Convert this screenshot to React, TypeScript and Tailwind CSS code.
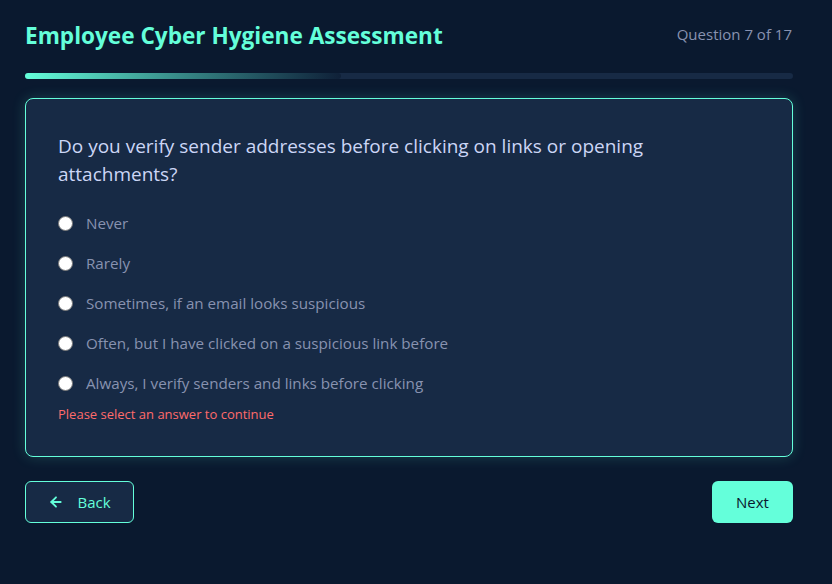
import { ArrowLeft } from "lucide-react";

const options = [
  "Never",
  "Rarely",
  "Sometimes, if an email looks suspicious",
  "Often, but I have clicked on a suspicious link before",
  "Always, I verify senders and links before clicking",
];

const App = () => {
  return (
    <div className="min-h-screen w-full bg-[#0a192f] font-['Open_Sans',sans-serif]">
      <div className="w-[768px] ml-[25px] pt-[20px]">
        {/* Header */}
        <div className="flex items-center justify-between h-[32px]">
          <h1 className="text-[22.6px] leading-[30px] font-bold text-[#64ffda] -mt-[1px]">
            Employee Cyber Hygiene Assessment
          </h1>
          <span className="text-[15px] text-[#8892b0] pr-[1px] -mt-[4px]">Question 7 of 17</span>
        </div>

        {/* Progress */}
        <div className="mt-[21px] h-[6px] w-full rounded-full bg-[#172a45]">
          <div
            className="h-full rounded-full bg-gradient-to-r from-[#64ffda] to-[#0f2038]"
            style={{ width: `${(7 / 17) * 100}%` }}
          />
        </div>

        {/* Question card */}
        <div className="mt-[19px] rounded-lg border border-[#64ffda] bg-[#172a45] px-8 pt-[33px] pb-[33px] shadow-[0_0_14px_rgba(100,255,218,0.18)]">
          <h2 className="text-[19px] leading-[28px] text-[#ccd6f6]">
            Do you verify sender addresses before clicking on links or opening attachments?
          </h2>
          <div className="mt-[15px] flex flex-col">
            {options.map((opt) => (
              <label key={opt} className="flex h-[40px] items-center gap-[13px] cursor-pointer">
                <span className="h-[15px] w-[15px] rounded-full border border-[#767676] bg-white" />
                <span className="text-[15.2px] text-[#8892b0]">{opt}</span>
              </label>
            ))}
          </div>
          <p className="text-[13px] leading-[20px] text-[#ff6b6b] pt-[1px] -mb-[1px]">
            Please select an answer to continue
          </p>
        </div>

        {/* Navigation */}
        <div className="mt-[24px] flex items-center justify-between">
          <button className="flex h-[42px] w-[109px] items-center justify-center gap-[13px] rounded-md border border-[#64ffda] bg-[#172a45] text-[15px] text-[#64ffda]">
            <ArrowLeft className="h-[16px] w-[16px]" strokeWidth={2.75} />
            Back
          </button>
          <button className="h-[42px] w-[81px] rounded-md bg-[#64ffda] text-[15px] text-[#0a192f]">
            Next
          </button>
        </div>
      </div>
    </div>
  );
};

export default App;
